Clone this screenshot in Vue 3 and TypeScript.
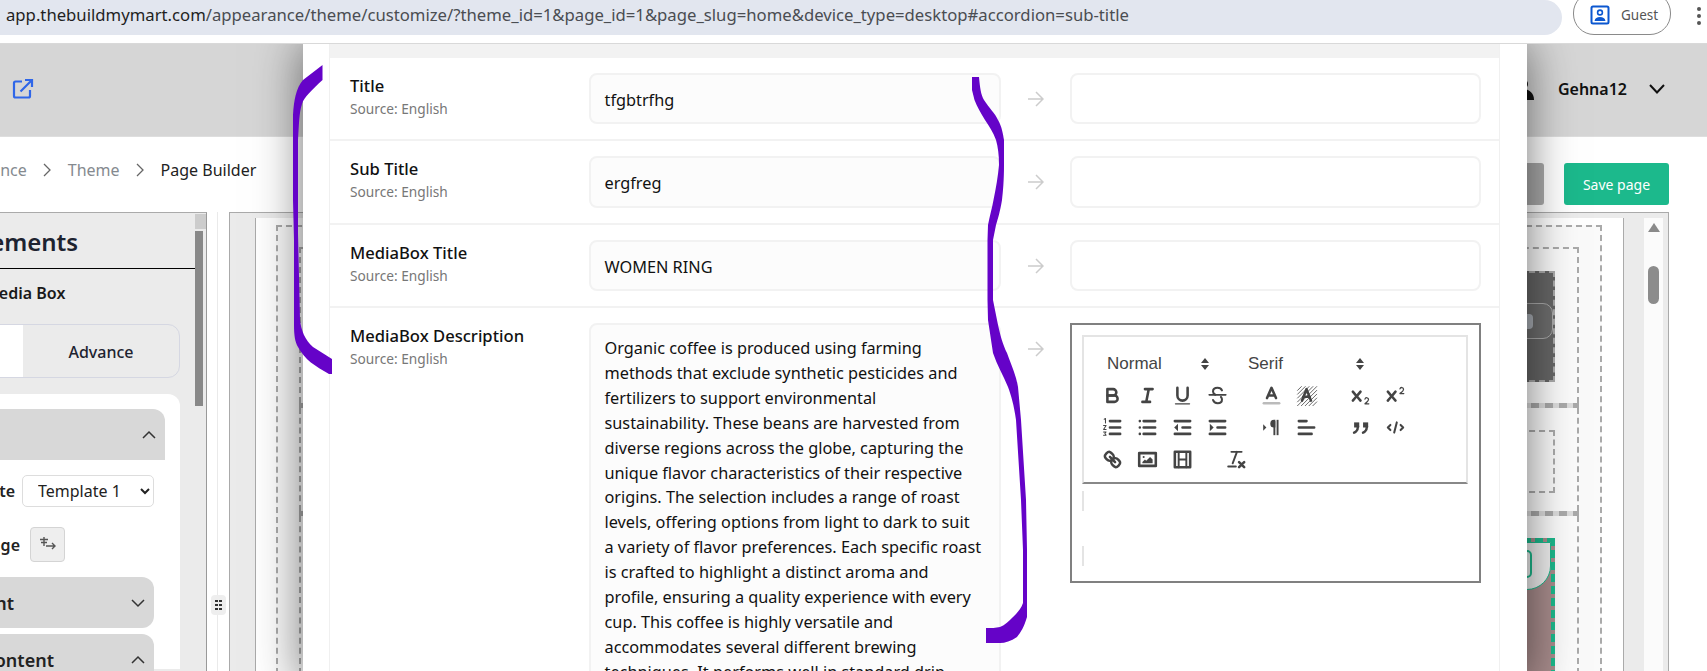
<template>
  <div class="screen">
    <!-- browser chrome -->
    <div class="browser-bar">
      <div class="address">
        <span class="domain">app.thebuildmymart.com</span>/appearance/theme/customize/?theme_id=1&amp;page_id=1&amp;page_slug=home&amp;device_type=desktop#accordion=sub-title
      </div>
      <div class="guest">
        <svg width="20" height="20" viewBox="0 0 20 20">
          <rect x="1.500" y="1.500" width="17" height="17" rx="1.500" fill="#fff" stroke="#0b57d0" stroke-width="2" />
          <circle cx="10" cy="7.500" r="2.400" fill="none" stroke="#0b57d0" stroke-width="1.600" />
          <path d="M4.500 16c.6-3 2.600-4 5.500-4s4.900 1 5.500 4z" fill="#0b57d0" />
        </svg>
        <span>Guest</span>
      </div>
      <div class="kebab"><i></i><i></i><i></i></div>
    </div>

    <div class="page">
      <header class="site-header">
        <svg class="open-link" width="22" height="22" viewBox="0 0 22 22" fill="none" stroke="#2f66e8" stroke-width="2.200">
          <path d="M10 3.500H3.500a1.500 1.500 0 0 0-1.500 1.500v13a1.500 1.500 0 0 0 1.500 1.500h13a1.500 1.500 0 0 0 1.500-1.500V12" />
          <path d="M8.500 13.500 19.500 2.500M13 2h7v7" />
        </svg>
        <div class="user">
          <svg class="avatar" width="24" height="22" viewBox="0 0 24 22">
            <circle cx="14" cy="2.500" r="3" fill="#3d7fc4" />
            <circle cx="13" cy="6" r="5" fill="#111" />
            <path d="M2 22c0-7 4-11 11-11 6 0 11 4 11 11z" fill="#111" />
          </svg>
          <span class="user-name">Gehna12</span>
          <svg width="18" height="18" viewBox="0 0 18 18" fill="none" stroke="#111" stroke-width="2"><path d="m2 5 7 7.500L16 5" /></svg>
        </div>
      </header>

      <div class="toolbar-row">
        <nav class="crumbs">
          <span>Appearance</span>
          <svg width="10" height="14" viewBox="0 0 10 14" fill="none" stroke="#666" stroke-width="1.300"><path d="m2 1 6 6-6 6" /></svg>
          <span>Theme</span>
          <svg width="10" height="14" viewBox="0 0 10 14" fill="none" stroke="#666" stroke-width="1.300"><path d="m2 1 6 6-6 6" /></svg>
          <span class="current">Page Builder</span>
        </nav>
        <button class="btn-grey">Preview</button>
        <button class="btn-save">Save page</button>
      </div>

      <div class="workspace">
        <aside class="side-panel">
          <div class="side-content">
            <h2 class="side-title">Elements</h2>
            <div class="side-sub">Media Box</div>
            <div class="tabs">
              <div class="tab on"></div>
              <div class="tab">Advance</div>
            </div>
            <div class="card">
              <div class="acc-head top">
                <svg class="chev" width="14" height="10" viewBox="0 0 14 10" fill="none" stroke="#333" stroke-width="1.500"><path d="m1 8 6-6 6 6" /></svg>
              </div>
              <div class="acc-body">
                <div class="field">
                  <label class="label-a">Template</label>
                  <select class="tpl"><option>Template 1</option></select>
                </div>
                <div class="field lang">
                  <label class="label-b">Language</label>
                  <button class="translate">
                    <svg width="18" height="16" viewBox="0 0 18 16" fill="none" stroke="#555" stroke-width="1.400">
                      <path d="M5 1v9M1 3.500h8M2 6.500h6M7 10h9M13 7l3 3-3 3" />
                    </svg>
                  </button>
                </div>
                <div class="acc-head mini">
                  <span class="short">Alignment</span>
                  <svg width="14" height="10" viewBox="0 0 14 10" fill="none" stroke="#333" stroke-width="1.500"><path d="m1 2 6 6 6-6" /></svg>
                </div>
                <div class="acc-head mini">
                  <span>Content</span>
                  <svg width="14" height="10" viewBox="0 0 14 10" fill="none" stroke="#333" stroke-width="1.500"><path d="m1 8 6-6 6 6" /></svg>
                </div>
              </div>
            </div>
          </div>
          <div class="side-scroll">
            <div class="scroll-btn"></div>
            <div class="scroll-thumb"></div>
          </div>
        </aside>

        <div class="splitter">
          <div class="grip"><i></i><i></i><i></i><i></i><i></i><i></i></div>
        </div>

        <section class="canvas">
          <div class="canvas-white">
            <div class="outer-dash">
              <div class="sec sec-a"><div class="block dark"><div class="pill"><i></i></div></div></div>
              <div class="sec-gap"></div>
              <div class="sec sec-b"><div class="block empty"></div></div>
              <div class="sec-gap"></div>
              <div class="sec sec-c">
                <div class="block green">
                  <div class="green-top"><i></i></div>
                </div>
              </div>
            </div>
          </div>
          <div class="canvas-scroll">
            <div class="up"></div>
            <div class="thumb"></div>
          </div>
        </section>
      </div>

      <!-- translation modal -->
      <div class="modal">
        <div class="modal-inner">
          <div class="modal-strip"></div>
          <div v-for="row in rows" :key="row.title" class="row">
            <div class="row-label">
              <div class="row-title">{{ row.title }}</div>
              <div class="row-source">Source: English</div>
            </div>
            <div class="src-input">{{ row.value }}</div>
            <div class="arrow">
              <svg width="17" height="16" viewBox="0 0 17 16" fill="none" stroke="#ccc" stroke-width="1.500"><path d="M1 8h15M9 1l7 7-7 7" /></svg>
            </div>
            <div class="dst-input"></div>
          </div>
          <div class="row last">
            <div class="row-label">
              <div class="row-title">MediaBox Description</div>
              <div class="row-source">Source: English</div>
            </div>
            <div class="src-input area">{{ description }}</div>
            <div class="arrow">
              <svg width="17" height="16" viewBox="0 0 17 16" fill="none" stroke="#ccc" stroke-width="1.500"><path d="M1 8h15M9 1l7 7-7 7" /></svg>
            </div>
            <div class="editor">
              <div class="ed-toolbar">
                <div class="ed-pickers">
                  <div class="picker p1">Normal<svg width="12" height="16" viewBox="0 0 12 16" fill="#444"><path d="M6 2l4 5H2zM6 14l4-5H2z" /></svg></div>
                  <div class="picker p2">Serif<svg width="12" height="16" viewBox="0 0 12 16" fill="#444"><path d="M6 2l4 5H2zM6 14l4-5H2z" /></svg></div>
                </div>
                <div class="ed-line">
                  <div class="ed-group">
                    <button><svg viewBox="0 0 18 18"><path d="M5,4H9.500A2.500,2.500,0,0,1,12,6.500v0A2.500,2.500,0,0,1,9.500,9H5V4Z" /><path d="M5,9h5.500A2.500,2.500,0,0,1,13,11.500v0A2.500,2.500,0,0,1,10.500,14H5V9Z" /></svg></button>
                    <button><svg viewBox="0 0 18 18"><path d="M7 4h6M5 14h6M8 14l2-10" /></svg></button>
                    <button><svg viewBox="0 0 18 18"><path d="M5,3V9a4,4,0,0,0,4,4a4,4,0,0,0,4-4V3" /><rect class="solid" x="3" y="15" width="12" height="1" rx=".5" /></svg></button>
                    <button><svg viewBox="0 0 18 18"><path d="M2.500 8.500h13" stroke-width="1.300" /><path d="M12.500 5C12 3.800 10.600 3 9 3 6.800 3 5.500 4.300 5.500 5.800c0 1.100.6 2 1.800 2.600M5.500 12.500C6 14 7.400 15 9.200 15c2 0 3.300-1.300 3.300-2.900 0-.8-.3-1.500-.8-2" stroke-width="1.600" /></svg></button>
                  </div>
                  <div class="ed-group">
                    <button><svg viewBox="0 0 18 18"><path d="M3 15h12" stroke="#bbb" /><path d="M5.500 11 9 3l3.500 8M11.600 9H6.400" /></svg></button>
                    <button>
                      <svg viewBox="0 0 18 18">
                        <g stroke="#555" stroke-width=".7"><path d="M2 5 5 2M2 8 8 2M2 11 11 2M2 14 14 2M2 17 17 2M5 17 17 5M8 17 17 8M11 17 17 11M14 17l3-3" /></g>
                        <path d="M5.500 13 9 4l3.500 9M11.600 10H6.400" />
                      </svg>
                    </button>
                  </div>
                  <div class="ed-group">
                    <button><svg viewBox="0 0 18 18"><path class="solid" d="M15.500,15H13.861a3.858,3.858,0,0,0,1.914-2.975,1.800,1.800,0,0,0-1.600-1.751A1.921,1.921,0,0,0,12.021,11.700a0.500,0.500,0,1,0,.957.291,0.914,0.914,0,0,1,1.053-.725,0.810,0.810,0,0,1,.744.762c0,1.076-1.160,1.860-1.940,2.473A1.500,1.500,0,0,0,12,15.500a0.500,0.500,0,0,0,.5.500h3A0.500,0.500,0,0,0,15.500,15Z" /><path class="solid" d="M9.650,5.241a1,1,0,0,0-1.409.108L6,7.964,3.759,5.349A1,1,0,0,0,2.192,6.590L4.683,9.500,2.241,12.350a1,1,0,0,0,1.518,1.300L6,11.036l2.241,2.614a1,1,0,0,0,1.567-1.241L7.317,9.500,9.808,6.590A1,1,0,0,0,9.650,5.241Z" /></svg></button>
                    <button><svg viewBox="0 0 18 18"><path class="solid" d="M15.500,7H13.861a4.015,4.015,0,0,0,1.914-2.975,1.800,1.800,0,0,0-1.600-1.751A1.922,1.922,0,0,0,12.021,3.700a0.500,0.500,0,1,0,.957.291,0.917,0.917,0,0,1,1.053-.725,0.810,0.810,0,0,1,.744.762c0,1.077-1.164,1.925-1.934,2.486A1.423,1.423,0,0,0,12,7.500a0.500,0.500,0,0,0,.5.500h3A0.500,0.500,0,0,0,15.500,7Z" /><path class="solid" d="M9.651,5.241a1,1,0,0,0-1.410.108L6,7.964,3.759,5.349a1,1,0,1,0-1.519,1.300L4.683,9.500,2.241,12.350a1,1,0,1,0,1.519,1.300L6,11.036l2.241,2.615a1,1,0,0,0,1.519-1.300L7.317,9.500,9.759,6.651A1,1,0,0,0,9.651,5.241Z" /></svg></button>
                  </div>
                </div>
                <div class="ed-line">
                  <div class="ed-group">
                    <button><svg viewBox="0 0 18 18"><path d="M7 4h8M7 9h8M7 14h8" /><path class="thin" d="M2.500 2.500l1-.5v3.500M2 7.500h2l-2 3h2M2 12.500h2l-1 1 1 1.500H2" /></svg></button>
                    <button><svg viewBox="0 0 18 18"><path d="M6 4h9M6 9h9M6 14h9M3 4h.01M3 9h.01M3 14h.01" /></svg></button>
                    <button><svg viewBox="0 0 18 18"><path d="M3 14h12M3 4h12M9 9h6" /><path class="solid" d="M5.500 6v6L2.500 9z" /></svg></button>
                    <button><svg viewBox="0 0 18 18"><path d="M3 14h12M3 4h12M9 9h6" /><path class="solid" d="M3 6v6l3-3z" /></svg></button>
                  </div>
                  <div class="ed-group">
                    <button><svg viewBox="0 0 18 18"><path class="solid" d="M2.500 11.500l2.500-2.500-2.500-2.500zM11 3a3 3 0 0 0 0 6h1V3z" /><rect class="solid" x="10.500" y="4" width="1.500" height="11" /><rect class="solid" x="13" y="3" width="1.500" height="12" /></svg></button>
                    <button><svg viewBox="0 0 18 18"><path d="M3 9h12M3 14h10M3 4h6" /></svg></button>
                  </div>
                  <div class="ed-group">
                    <button><svg viewBox="0 0 18 18"><rect class="solid" x="4" y="5" width="4" height="4" /><rect class="solid" x="11" y="5" width="4" height="4" /><path d="M7,8c0,4-3,5-3,5M14,8c0,4-3,5-3,5" /></svg></button>
                    <button><svg viewBox="0 0 18 18"><path d="M5 7 3 9l2 2M13 7l2 2-2 2M10 5 8 13" stroke-width="1.600" /></svg></button>
                  </div>
                </div>
                <div class="ed-line">
                  <div class="ed-group">
                    <button><svg viewBox="0 0 18 18"><path d="M7 7l4 4" /><path d="M8.900,4.577a3.476,3.476,0,0,1,.36,4.679A3.476,3.476,0,0,1,4.577,8.900C3.185,7.500,2.035,6.400,4.217,4.217S7.500,3.185,8.900,4.577Z" /><path d="M13.423,9.100a3.476,3.476,0,0,0-4.679-.36,3.476,3.476,0,0,0,.36,4.679c1.392,1.392,2.500,2.542,4.679.36S14.815,10.500,13.423,9.100Z" /></svg></button>
                    <button><svg viewBox="0 0 18 18"><rect x="2.500" y="4" width="13" height="10" /><path class="solid" d="M5 12v-1l2-2 1 1 3-3 2 2v3z" /><circle class="solid" cx="6" cy="7" r=".8" /></svg></button>
                    <button><svg viewBox="0 0 18 18"><rect x="3" y="3" width="12" height="12" /><path d="M6 3v12M12 3v12M6 9h6" stroke-width="1.500" /></svg></button>
                    <button class="clean"><svg viewBox="0 0 18 18"><path d="M5 3h8M6 12 9.350 3M2.500 14.500h6" stroke-width="1.500" /><path d="M11 11l4 4M15 11l-4 4" /></svg></button>
                  </div>
                </div>
              </div>
              <div class="ed-body"><i></i><i></i></div>
            </div>
          </div>
        </div>
      </div>
    </div>

    <!-- hand-drawn annotation over the screenshot -->
    <svg class="scribble" width="1707" height="671" viewBox="0 0 1707 671">
      <path d="M322.500,65 L322.500,80 C312,90 304,97 302,104 C299,113 299,125 298,140 L298,233 L300,320 C301,330 305,340 313,347 L332,359 L332,374 L329,374 C315,366 305,360 298,347 C295,342 294,335 294,325 L294,240 L293,200 L293,115 C294,100 296,88 303,80 Z" />
      <path d="M979,77 C980,88 981,95 984,100 C989,108 995,113 998,120 C1002,127 1003,134 1004,140 L1004,165 C1004,180 1003,192 1002,200 C1000,212 998,218 996,225 L993,240 L993,300 L997,320 C1000,335 1003,345 1007,353 C1012,367 1016,375 1018,387 L1021,420 L1026,500 L1027,550 L1027,617 C1024,627 1021,632 1017,637 C1011,641 1005,643 1000,643 L986,643 L986,628 C991,628 996,628 1000,627 C1005,625 1009,621 1013,617 C1017,613 1021,609 1023,603 L1023,550 L1021,500 L1016,420 C1014,405 1011,395 1008,387 C1003,375 997,365 993,353 L988,320 L987.500,300 L987.500,240 L988,225 C990,215 992,208 993.500,200 C996,188 998,176 999,165 C999,155 998,147 996,140 C993,132 989,126 985,120 C981,113 977,107 974.500,100 L972,90 L972,77 Z" />
    </svg>
  </div>
</template>

<script setup lang="ts">
const rows = [
  { title: 'Title', value: 'tfgbtrfhg' },
  { title: 'Sub Title', value: 'ergfreg' },
  { title: 'MediaBox Title', value: 'WOMEN RING' }
]

// line breaks follow the reference, the fallback font doesn't wrap the same way
const description = [
  'Organic coffee is produced using farming',
  'methods that exclude synthetic pesticides and',
  'fertilizers to support environmental',
  'sustainability. These beans are harvested from',
  'diverse regions across the globe, capturing the',
  'unique flavor characteristics of their respective',
  'origins. The selection includes a range of roast',
  'levels, offering options from light to dark to suit',
  'a variety of flavor preferences. Each specific roast',
  'is crafted to highlight a distinct aroma and',
  'profile, ensuring a quality experience with every',
  'cup. This coffee is highly versatile and',
  'accommodates several different brewing',
  'techniques. It performs well in standard drip'
].join('\n')
</script>

<style>
html,
body {
  margin: 0;
  overflow: hidden;
  background: #fff;
}
</style>

<style scoped>
.screen {
  position: relative;
  width: 1707px;
  height: 671px;
  overflow: hidden;
  font-family: "Noto Sans", "Open Sans", sans-serif;
  color: #111;
}

.browser-bar {
  display: flex;
  height: 44px;
  box-sizing: border-box;
  background: #fff;
  border-bottom: 1px solid #d9d9d9;
}

.address {
  width: 1562px;
  height: 35px;
  box-sizing: border-box;
  padding: 5px 0 0 6px;
  background: #e2e6ef;
  border-radius: 0 20px 20px 0;
  font-size: 16.700px;
  line-height: 20px;
  color: #4a4d52;
  white-space: nowrap;
}

.domain {
  color: #1f1f1f;
}

.guest {
  display: flex;
  align-items: center;
  gap: 11px;
  width: 98px;
  box-sizing: border-box;
  margin: -8px 0 0 11px;
  padding: 2px 0 0 16px;
  border: 1px solid #8a8a8a;
  border-radius: 21px;
  font-size: 13.500px;
  color: #555;
  height: 43px;
}

.kebab {
  display: flex;
  flex-direction: column;
  gap: 3px;
  margin: 7px 0 0 26px;
}

.kebab i {
  width: 4px;
  height: 4px;
  border-radius: 50%;
  background: #555;
}

.page {
  position: relative;
  height: 627px;
  overflow: hidden;
  background: #fff;
}

.site-header {
  display: flex;
  align-items: center;
  justify-content: space-between;
  height: 93px;
  box-sizing: border-box;
  padding: 0 41px 2px 12px;
  background: #d6d6d6;
  border-bottom: 1px solid #dedede;
}

.user {
  display: flex;
  align-items: center;
  gap: 21px;
}

.avatar {
  margin-right: 3px;
}

.user-name {
  font-size: 16px;
  font-weight: 600;
}

.toolbar-row {
  display: flex;
  align-items: center;
  height: 75px;
  padding-right: 38px;
}

.crumbs {
  display: flex;
  align-items: center;
  gap: 15.500px;
  margin: 0 auto 9px -63px;
  font-size: 16px;
  color: #858a8f;
}

.crumbs .current {
  color: #222;
}

.btn-grey,
.btn-save {
  height: 42px;
  margin-top: 19px;
  border: 0;
  border-radius: 3px;
  font-family: inherit;
  font-size: 14px;
}

.btn-grey {
  width: 100px;
  background: #aaa;
  color: #aaa;
}

.btn-save {
  width: 105px;
  margin-left: 20px;
  background: #1cb98c;
  color: #fff;
}

.workspace {
  display: flex;
  height: 459px;
}

.side-panel {
  display: flex;
  flex: none;
  width: 317px;
  height: 459px;
  box-sizing: border-box;
  margin-left: -110px;
  background: #ebebeb;
  border-top: 1px solid #aaa;
  border-right: 1px solid #999;
}

.side-content {
  width: 305px;
  flex: none;
}

.side-title {
  margin: 0 0 0 80px;
  padding-top: 11px;
  font-size: 24px;
  font-weight: 600;
  line-height: 36px;
  color: #1d2330;
}

.side-sub {
  padding: 12px 0 0 94px;
  margin-top: 8px;
  border-top: 1px solid #000;
  font-size: 16px;
  font-weight: 600;
  line-height: 24px;
  color: #1a1a1a;
}

.tabs {
  display: flex;
  height: 54px;
  margin: 19px 15px 0 0;
  box-sizing: border-box;
  border: 1px solid #d5d7e2;
  border-radius: 0 12px 12px 0;
}

.tab {
  flex: 1;
  display: flex;
  align-items: center;
  justify-content: center;
  padding-top: 1px;
  font-size: 16px;
  font-weight: 500;
  color: #1d2330;
}

.tab.on {
  flex: none;
  width: 132px;
  background: #fff;
}

.card {
  margin: 16px 15px 0 0;
  padding: 15px 15px 0 0;
  background: #fff;
  border-radius: 0 12px 0 0;
  height: 260px;
}

.acc-head {
  display: flex;
  align-items: center;
  justify-content: flex-end;
  height: 51px;
  background: #d8d8d8;
}

.acc-head.top {
  padding-right: 9px;
  border-radius: 0 12px 0 0;
}

.acc-body {
  padding: 15px 11px 0 0;
}

.field {
  display: flex;
  align-items: center;
}

.label-a,
.label-b {
  text-align: right;
  font-size: 16px;
  font-weight: 600;
  color: #222;
}

.label-a {
  width: 125px;
  margin-right: 7px;
}

.tpl {
  width: 132px;
  height: 32px;
  box-sizing: border-box;
  padding-left: 11px;
  background: #fff;
  border: 1px solid #ddd;
  border-radius: 5px;
  font-family: inherit;
  font-size: 16px;
  color: #222;
}

.lang {
  margin-top: 20px;
}

.label-b {
  width: 130px;
  margin-right: 10px;
}

.translate {
  display: flex;
  align-items: center;
  justify-content: center;
  width: 35px;
  height: 35px;
  padding: 0 0 2px;
  background: #eee;
  border: 1px solid #d4d4d4;
  border-radius: 4px;
}

.acc-head.mini {
  justify-content: space-between;
  padding-right: 9px;
  margin-top: 6px;
  border-radius: 0 12px 12px 0;
  font-size: 18px;
  font-weight: 600;
  color: #222;
}

.lang + .acc-head.mini {
  margin-top: 15px;
}

.acc-head.mini span {
  margin-left: 40px;
  width: 124px;
  text-align: right;
}

.acc-head.mini span.short {
  width: 100px;
  margin-left: 24px;
  margin-right: 40px;
}

.side-scroll {
  width: 11px;
  padding-top: 1px;
  background: #ebebeb;
}

.scroll-btn {
  height: 15px;
  background: #ccc;
}

.scroll-thumb {
  width: 8px;
  height: 175px;
  margin-top: 2px;
  background: #888;
}

.splitter {
  position: relative;
  flex: none;
  width: 22px;
  background: linear-gradient(90deg, #fff 0 10px, #eaeaea 10px 11px, #fff 11px);
}

.grip {
  position: absolute;
  left: 4px;
  top: 383px;
  display: grid;
  grid-template-columns: 3px 3px;
  gap: 2px 1px;
  align-content: center;
  justify-content: center;
  width: 15px;
  height: 20px;
  background: #eee;
  border-radius: 4px;
}

.grip i {
  background: #333;
  height: 2px;
}

.canvas {
  display: flex;
  flex: none;
  width: 1440px;
  box-sizing: border-box;
  padding: 5px 5px 0 25px;
  background: #ebebeb;
  border: 1px solid #aaa;
  border-bottom: 0;
}

.canvas-white {
  flex: none;
  width: 1369px;
  box-sizing: border-box;
  padding: 7px 21px 0 20px;
  background: #fff;
  border-left: 1px solid #aaa;
  border-right: 1px solid #aaa;
}

.outer-dash {
  height: 600px;
  box-sizing: border-box;
  padding: 20px 21px 0;
  background: #fafafa;
  border: 2px dashed #aaa;
}

.sec {
  box-sizing: border-box;
  padding: 22px;
  background: #fbfbfb;
  border: 2px dashed #aaa;
  border-bottom: 0;
}

.sec-a {
  height: 156px;
}

.sec-b {
  height: 103px;
  border-top: 0;
}

.sec-c {
  height: 300px;
  border-top: 0;
}

.sec-gap {
  height: 5px;
  background: repeating-linear-gradient(90deg, #aaa 0 8px, #ddd 8px 14px);
}

.block {
  box-sizing: border-box;
  border: 2px dashed #aaa;
}

.block.dark {
  position: relative;
  height: 111px;
  background: #666;
}

.pill {
  position: absolute;
  top: 30px;
  right: 0;
  width: 120px;
  height: 36px;
  box-sizing: border-box;
  background: #6d6d6d;
  border: 1px solid #aaa;
  border-radius: 10px;
}

.pill i {
  position: absolute;
  right: 19px;
  top: 10px;
  width: 12px;
  height: 15px;
  border-radius: 4px;
  background: #a9aeb5;
}

.block.empty {
  height: 63px;
}

.block.green {
  height: 200px;
  background: #a88c8c;
  border: 4px dashed #1cb98c;
}

.green-top {
  position: relative;
  height: 48px;
  box-sizing: border-box;
  background: #efefef;
  border: 1px solid #1cb98c;
  border-radius: 0 0 24px 0;
}

.green-top i {
  position: absolute;
  right: 18px;
  top: 7px;
  width: 14px;
  height: 24px;
  border: 2px solid #1cb98c;
  border-radius: 5px;
}

.canvas-scroll {
  position: relative;
  width: 20px;
  margin-left: 20px;
  background: #fbfbfb;
}

.up {
  width: 0;
  height: 0;
  margin: 5px auto 0;
  border-left: 6px solid transparent;
  border-right: 6px solid transparent;
  border-bottom: 9px solid #8a8a8a;
}

.thumb {
  width: 11px;
  height: 38px;
  margin: 34px auto 0;
  background: #8c8c8c;
  border-radius: 6px;
}

/* modal */
.modal {
  position: absolute;
  top: 0;
  left: 303px;
  width: 1224px;
  height: 640px;
  box-sizing: border-box;
  padding: 0 27px 0 26px;
  background: #fff;
  box-shadow: 0 0 45px rgba(0, 0, 0, 0.55);
}

.modal-inner {
  height: 100%;
  border-left: 1px solid #f0f0f0;
  border-right: 1px solid #f0f0f0;
}

.modal-strip {
  height: 14px;
  background: #f2f2f2;
}

.row {
  display: grid;
  grid-template-columns: 238.500px 412.500px 69px 411px;
  padding: 15px 0 15px 20px;
  border-bottom: 2px solid #f2f2f2;
}

.row.last {
  border-bottom: 0;
}

.row-title {
  padding-top: 1px;
  font-size: 16.600px;
  font-weight: 500;
  line-height: 24px;
  color: #111;
}

.row-source {
  margin-top: 2px;
  font-size: 13.700px;
  line-height: 18px;
  color: #777;
}

.src-input,
.dst-input {
  height: 51.330px;
  box-sizing: border-box;
  border: 2px solid #f2f2f2;
  border-radius: 8px;
}

.src-input {
  padding: 0 14px;
  background: #fcfcfc;
  font-size: 16.300px;
  line-height: 51px;
  color: #111;
}

.src-input.area {
  height: 460px;
  padding: 11px 14px;
  line-height: 24.900px;
  white-space: pre-line;
}

.arrow {
  display: flex;
  justify-content: center;
  padding-top: 18px;
}

.editor {
  width: 411px;
  height: 260px;
  box-sizing: border-box;
  padding: 10px 11px 0 10px;
  border: 2px solid #808080;
}

.ed-toolbar {
  box-sizing: border-box;
  height: 149px;
  padding: 11px 0 0 11px;
  border: 2px solid #e4e4e4;
  border-bottom-color: #888;
}

.ed-pickers {
  display: flex;
  height: 32px;
  align-items: center;
  font-family: "Liberation Sans", Arial, sans-serif;
  font-size: 17px;
  color: #444;
}

.picker {
  display: flex;
  align-items: center;
  justify-content: space-between;
}

.p1 {
  width: 104px;
  margin-left: 12px;
}

.p2 {
  width: 118px;
  margin-left: 37px;
}

.ed-line {
  display: flex;
  height: 32px;
}

.ed-group {
  display: flex;
  margin-right: 19px;
}

.ed-group button {
  display: flex;
  align-items: center;
  justify-content: center;
  width: 35px;
  height: 32px;
  padding: 0;
  background: none;
  border: 0;
}

.ed-group button.clean {
  margin-left: 19px;
}

.ed-group svg {
  width: 23px;
  height: 23px;
  fill: none;
  stroke: #444;
  stroke-width: 2;
  stroke-linecap: round;
  stroke-linejoin: round;
}

.ed-group svg .solid {
  fill: #444;
  stroke: none;
}

.ed-group svg .thin {
  stroke-width: .8;
}

.ed-body {
  padding-top: 7px;
}

.ed-body i {
  display: block;
  width: 2px;
  height: 20px;
  margin-bottom: 35px;
  background: #e4e4e4;
}

.scribble {
  position: absolute;
  top: 0;
  left: 0;
  pointer-events: none;
  fill: #6503c8;
}
</style>
